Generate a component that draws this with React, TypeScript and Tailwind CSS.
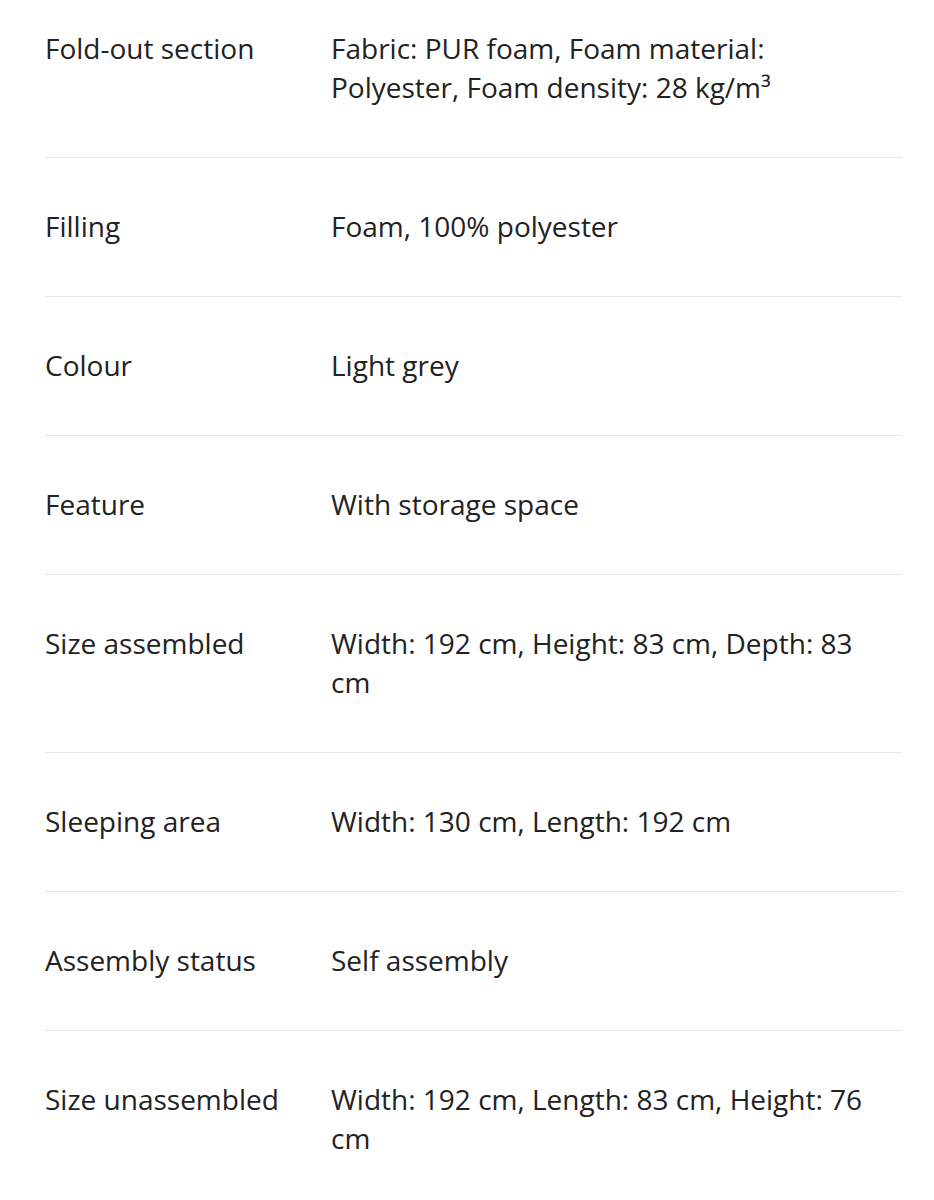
import React from "react";

const rows: [string, React.ReactNode][] = [
  ["Fold-out section", <>Fabric: PUR foam, Foam material: Polyester, Foam density: 28 kg/m³</>],
  ["Filling", "Foam, 100% polyester"],
  ["Colour", "Light grey"],
  ["Feature", "With storage space"],
  ["Size assembled", "Width: 192 cm, Height: 83 cm, Depth: 83 cm"],
  ["Sleeping area", "Width: 130 cm, Length: 192 cm"],
  ["Assembly status", "Self assembly"],
  ["Size unassembled", "Width: 192 cm, Length: 83 cm, Height: 76 cm"],
];

export default function App() {
  return (
    <div
      className="w-[934px] h-[1200px] bg-white overflow-hidden text-[#222] text-[28px] leading-[39px]"
      style={{ fontFamily: '"Open Sans", sans-serif' }}
    >
      <div className="ml-[45px] w-[857px]">
        {rows.map(([k, v], i) => (
          <div
            key={i}
            className={`flex border-[#e6e6e6] ${i === 0 ? "pt-[29px]" : "pt-[49px]"} pb-[50px] ${i < rows.length - 1 ? "border-b" : ""}`}
          >
            <div className="w-[286px] shrink-0">{k}</div>
            <div className="w-[550px]">{v}</div>
          </div>
        ))}
      </div>
    </div>
  );
}
